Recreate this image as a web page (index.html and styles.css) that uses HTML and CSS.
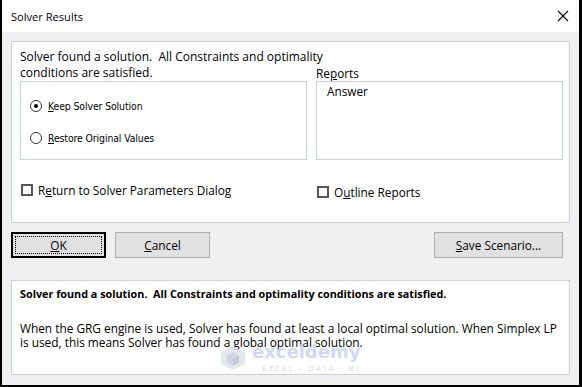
FILE: index.html
```html
<!DOCTYPE html>
<html lang="en">
<head>
    <meta charset="UTF-8">
    <meta name="viewport" content="width=device-width, initial-scale=1.0">
    <title>Solver Results</title>
    <link rel="stylesheet" href="styles.css">
</head>
<body>

    <div class="window">
        <div class="titlebar">
            <span class="title">Solver Results</span>
            <svg class="close" width="12" height="12" viewBox="0 0 12 12">
                <path d="M1 1L11 11M11 1L1 11" stroke="#000" stroke-width="1.1" fill="none"/>
            </svg>
        </div>

        <div class="body">
            <div class="panel main">
                <p class="msg">Solver found a solution.&nbsp; All Constraints and optimality<br>conditions are satisfied.</p>
                <div class="reports-label">Re<u>p</u>orts</div>
                <div class="box options">
                    <div class="radio-row"><span class="radio checked"></span><span><u>K</u>eep Solver Solution</span></div>
                    <div class="radio-row"><span class="radio"></span><span><u>R</u>estore Original Values</span></div>
                </div>
                <div class="box reports">
                    <div class="item">Answer</div>
                </div>
                <div class="check"><span class="checkbox"></span><span>R<u>e</u>turn to Solver Parameters Dialog</span></div>
                <div class="check outline"><span class="checkbox"></span><span>O<u>u</u>tline Reports</span></div>
            </div>

            <div class="buttons">
                <button class="btn default"><span class="focus"><u>O</u>K</span></button>
                <button class="btn"><u>C</u>ancel</button>
                <button class="btn save"><u>S</u>ave Scenario...</button>
            </div>

            <div class="panel info">
                <p class="bold">Solver found a solution.&nbsp; All Constraints and optimality conditions are satisfied.</p>
                <p class="desc">When the GRG engine is used, Solver has found at least a local optimal solution. When Simplex LP<br>is used, this means Solver has found a global optimal solution.</p>
            </div>
        </div>

        <!-- watermark -->
        <div class="mark">
            <svg class="mark-logo" width="28" height="26" viewBox="0 0 28 26">
                <path d="M14 1L26 7.5V19L14 25L2 19V7.5Z" fill="#dfe3ec"/>
                <path d="M14 7L20 10.5V17.5L14 21L8 17.5V10.5Z" fill="#c9cfdc"/>
                <path d="M14 14L20 10.5V17.5L14 21Z" fill="#b9c0d0"/>
            </svg>
            <div class="mark-text">
                <div class="mark-name">exceldemy</div>
                <div class="mark-sub">EXCEL - DATA - BI</div>
            </div>
        </div>
    </div>

</body>
</html>
```

FILE: styles.css
```css
        html,body,div,p{
            margin: 0;padding: 0;
        }
        body{
            background: #fff;
        }
        .window{
            width: 582px;height: 387px;box-sizing: border-box;position: relative;
            border-left: 2px solid #000;border-right: 3px solid #000;border-bottom: 2px solid #000;
            background: #f0f0f0;display: flex;flex-direction: column;
            font-family: "Open Sans", "Noto Sans", sans-serif;font-size: 11.8px;color: #000;
        }
        .titlebar{
            height: 32px;background: #fff;display: flex;align-items: center;justify-content: space-between;
            padding: 0 9px 0 9px;
        }
        .titlebar .title{
            font-size: 11.1px;
        }
        .titlebar .close{
            margin-right: 1px;
        }
        .body{
            padding: 9px 9px 0 9px;display: flex;flex-direction: column;
        }
        .panel{
            background: #fff;border: 1px solid #c4d2df;box-sizing: border-box;
        }

        /* top panel */
        .main{
            height: 182px;padding: 7px 6px 0 8px;
            display: grid;grid-template-columns: 287px 247px;grid-template-rows: 16px 16px 79px auto;column-gap: 9px;
        }
        .msg{
            grid-column: 1 / 3;grid-row: 1 / 3;line-height: 16px;font-size: 12px;
        }
        .reports-label{
            grid-column: 2;grid-row: 2;line-height: 16px;
        }
        .box{
            border: 1px solid #c4d2df;box-sizing: border-box;
        }
        .options{
            grid-column: 1;grid-row: 3;padding: 16px 0 0 9px;display: flex;flex-direction: column;gap: 16px;
        }
        .radio-row{
            display: flex;align-items: center;height: 16px;gap: 6px;
            font-family: "DejaVu Sans Condensed", "DejaVu Sans", sans-serif;font-size: 10.4px;letter-spacing: -0.1px;
        }
        .radio{
            width: 12px;height: 12px;box-sizing: border-box;border: 1.5px solid #333;border-radius: 50%;
            display: flex;align-items: center;justify-content: center;
        }
        .radio.checked::after{
            content: "";width: 4px;height: 4px;border-radius: 50%;background: #000;
        }
        .reports{
            grid-column: 2;grid-row: 3;padding: 1px 0 0 10px;line-height: 16px;
        }
        .check{
            grid-row: 4;grid-column: 1;display: flex;align-items: center;gap: 5px;height: 16px;margin: 22px 0 0 1px;
        }
        .check.outline{
            grid-column: 2;margin-top: 24px;
        }
        .checkbox{
            width: 12px;height: 12px;box-sizing: border-box;border: 2px solid #555;background: #fff;
        }

        /* buttons */
        .buttons{
            display: flex;gap: 9px;margin-top: 9px;padding-right: 7px;height: 26px;
        }
        .btn{
            width: 95px;height: 26px;background: #e1e1e1;border: 1px solid #adadad;
            font-family: inherit;font-size: 11.8px;color: #000;padding: 0;
        }
        .btn.default{
            border: 2px solid #000;padding: 2px;
        }
        .btn.default .focus{
            display: flex;align-items: center;justify-content: center;height: 100%;
            border: 1px dotted #000;box-sizing: border-box;
        }
        .btn.save{
            width: 129px;margin-left: auto;
        }

        /* bottom panel */
        .info{
            margin-top: 22px;height: 95px;padding: 6px 8px 0 8px;
        }
        .info .bold{
            font-weight: bold;line-height: 14px;font-size: 10.8px;
        }
        .info .desc{
            margin-top: 20px;line-height: 14px;font-size: 11.85px;
        }

        /* watermark */
        .mark{
            position: absolute;left: 217px;top: 343px;display: flex;align-items: flex-start;gap: 5px;opacity: 0.85;
        }
        .mark-logo{
            margin-top: 2px;
        }
        .mark-name{
            font-family: "DejaVu Sans", sans-serif;font-weight: bold;font-size: 18px;line-height: 18px;color: #c8d3f2;
        }
        .mark-sub{
            font-family: "DejaVu Sans", sans-serif;font-size: 7px;letter-spacing: 2.2px;color: #cfd1d6;margin: 4px 0 0 10px;
        }
```
